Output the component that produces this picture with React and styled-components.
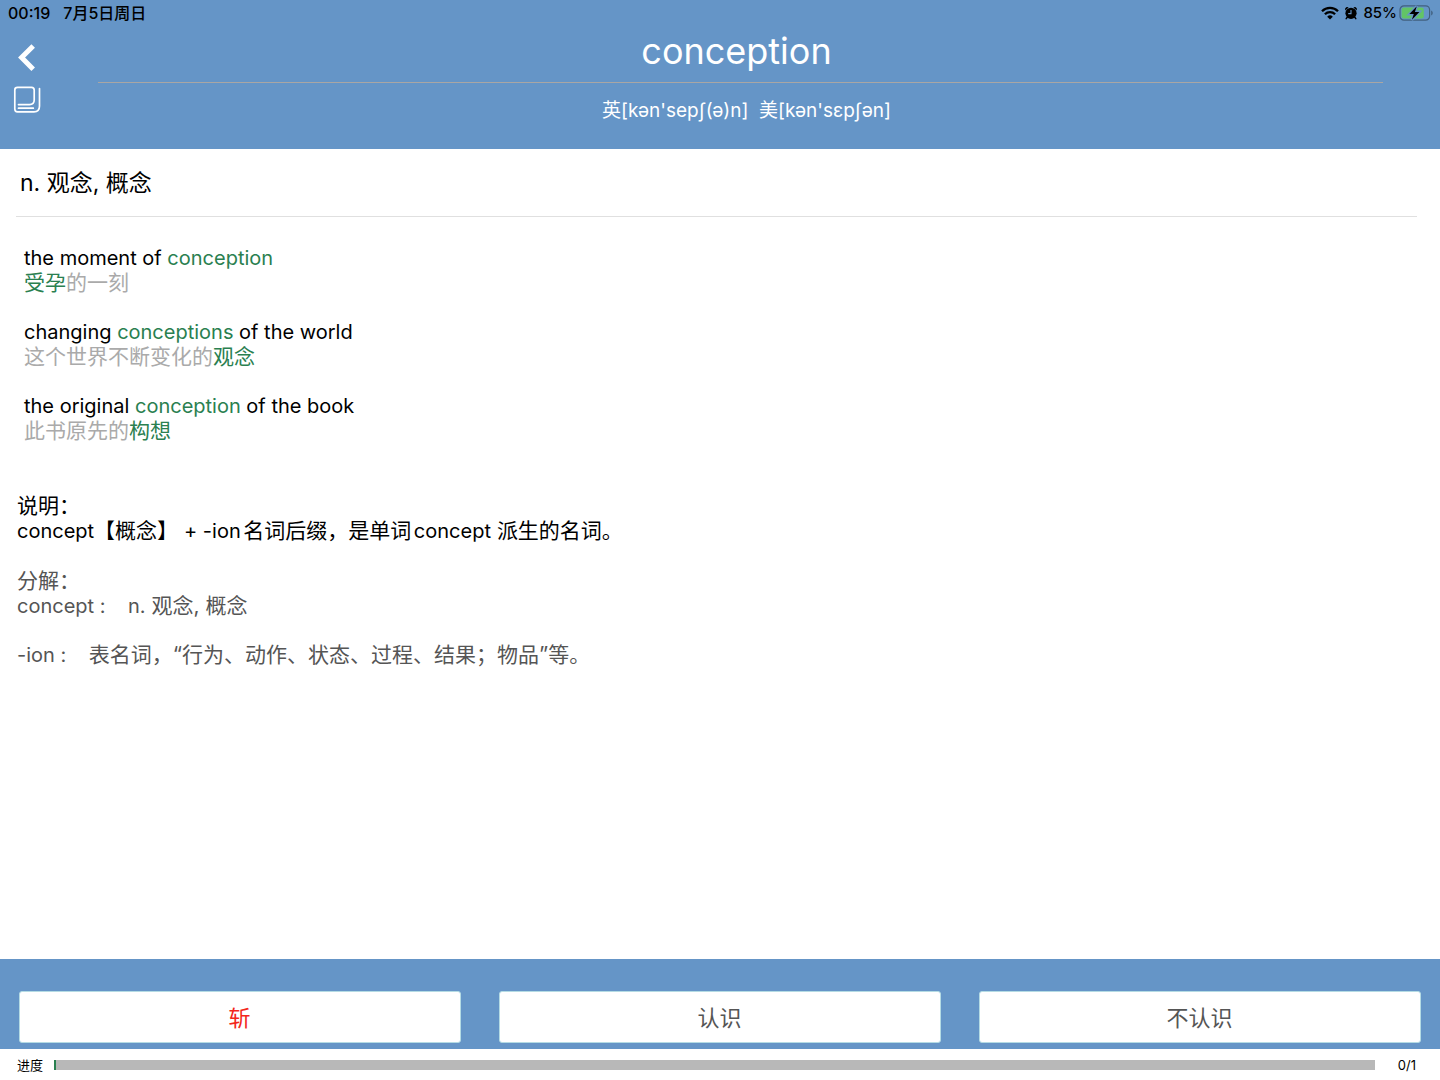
import React, { Component } from 'react'
import styled, { createGlobalStyle } from 'styled-components'

const GlobalStyle = createGlobalStyle`
    body {
        margin: 0;
        background: #fff;
        color: #000;
        font-family: Inter, "Noto Sans CJK SC", sans-serif;
    }
    * {
        box-sizing: border-box;
    }
`
const Page = styled.div`
    display: flex;
    flex-direction: column;
    min-height: 100vh;
`
const Header = styled.header`
    background: #6595c7;
    padding-bottom: 25px;
`
const StatusBar = styled.div`
    display: flex;
    align-items: center;
    justify-content: space-between;
    height: 25px;
    padding: 0 6px 0 8px;
    font-size: 15px;
    font-weight: 500;
`
const StatusGroup = styled.div`
    display: flex;
    align-items: center;
    gap: ${props => props.$gap};
`
const Clock = styled(StatusGroup)`
    font-size: 16px;
    line-height: 20px;
`
const HeaderBody = styled.div`
    display: flex;
    padding: 0 57px 0 12px;
`
const SideTools = styled.nav`
    display: flex;
    flex-direction: column;
    align-items: flex-start;
    gap: 12px;
    flex: 0 0 86px;
    padding-top: 17px;
`
const IconButton = styled.button`
    display: block;
    width: 30px;
    height: 30px;
    padding: 0;
    border: 0;
    background: none;
    color: #fff;
    svg {
        display: block;
    }
`
const WordPanel = styled.div`
    flex: 1;
    text-align: center;
    color: #fff;
`
const Word = styled.h1`
    margin: 0;
    padding: 2px 8px 7px 0;
    border-bottom: 1px solid #a9a6a4;
    font-size: 36px;
    line-height: 48px;
    font-weight: 400;
`
const Phonetics = styled.p`
    margin: 0;
    padding: 15px 0 0 12px;
    font-size: 19px;
    line-height: 26px;
    white-space: pre-wrap;
`
const Content = styled.main`
    flex: 1;
    padding: 0 23px 0 16px;
`
const Definition = styled.h2`
    margin: 0;
    padding: 17px 4px 15px;
    border-bottom: 1px solid #e0e0e0;
    font-size: 23px;
    line-height: 35px;
    font-weight: 400;
`
const Examples = styled.ul`
    list-style: none;
    display: flex;
    flex-direction: column;
    gap: 25px;
    margin: 0;
    padding: 29px 8px 0;
`
const Line = styled.p`
    margin: 0;
    font-size: ${props => props.$latin ? '20px' : '21px'};
    line-height: ${props => props.$latin ? '24px' : '25px'};
    color: ${props => props.$muted ? '#aaa' : 'inherit'};
    white-space: pre-wrap;
    text-autospace: normal;
`
const Mark = styled.em`
    font-style: normal;
    color: #2a8050;
`
const Notes = styled.section`
    padding: ${props => props.$first ? '50px' : '25px'} 1px 0;
    color: ${props => props.$soft ? '#555' : '#000'};
`
const Latin = styled.span`
    font-size: 20px;
    line-height: 1;
`
const Part = styled.div`
    & + & {
        padding-top: 24px;
    }
`
const Actions = styled.div`
    display: grid;
    grid-template-columns: repeat(3, 1fr);
    gap: 38px;
    padding: 32px 19px 6px;
    background: #6595c7;
`
const ActionButton = styled.button`
    height: 52px;
    padding: 0 1px 3px 0;
    border: 1px solid #b4dbe4;
    border-radius: 3px;
    background: #fff;
    color: ${props => props.$danger ? '#f3261b' : '#555'};
    font-family: inherit;
    font-size: 22px;
`
const ProgressRow = styled.footer`
    display: flex;
    align-items: center;
    height: 31px;
    padding: 0 24px 0 17px;
    font-size: 13px;
    label {
        flex: 0 0 37px;
    }
`
const ProgressBar = styled.progress`
    appearance: none;
    flex: 1;
    height: 10px;
    border: 0;
    border-left: 2px solid #2a8050;
    background: #b8b8b8;
    &::-webkit-progress-bar {
        background: #b8b8b8;
    }
    &::-webkit-progress-value {
        background: #2a8050;
    }
`
const Count = styled.span`
    flex: 0 0 41px;
    text-align: right;
`

const WifiIcon = () => (
    <svg width="18" height="14" viewBox="0 0 18 14" fill="none" stroke="#000" strokeWidth="2.3">
        <path d="M1 5.2A11.4 11.4 0 0 1 17 5.2" />
        <path d="M3.9 8.2A7.2 7.2 0 0 1 14.1 8.2" />
        <path d="M9 13.6L6.2 10.7A4 4 0 0 1 11.8 10.7Z" fill="#000" stroke="none" />
    </svg>
)

const AlarmIcon = () => (
    <svg width="14" height="14" viewBox="0 0 14 14">
        <circle cx="7" cy="7.3" r="5.6" />
        <path d="M1.2 4.4Q.6 2 2.2 1.3Q3.4 .7 4.6 1.4ZM12.8 4.4Q13.4 2 11.8 1.3Q10.6 .7 9.4 1.4Z" />
        <path d="M3.2 11.2L2.2 12.6M10.8 11.2L11.8 12.6" stroke="#000" strokeWidth="1.5" strokeLinecap="round" />
        <path d="M7 4V7.6H4.2" fill="none" stroke="#6595c7" strokeWidth="1.1" />
    </svg>
)

const BatteryIcon = () => (
    <svg width="35" height="16" viewBox="0 0 35 16">
        <rect x="1" y=".8" width="29.6" height="14.4" rx="4" fill="none" stroke="#41607f" strokeWidth="1.2" />
        <rect x="2.6" y="2.5" width="22.2" height="11" rx="2.2" fill="#62c466" />
        <path d="M32.2 5.5C34.2 6.3 34.2 9.7 32.2 10.5Z" fill="#41607f" />
        <path d="M17.8 1.2L10.4 9.1H14.8L12.9 14.8L20.4 6.9H15.9Z" fill="#000" stroke="#6595c7" strokeWidth="2.6" paintOrder="stroke" />
    </svg>
)

const BackIcon = () => (
    <svg width="30" height="30" viewBox="0 0 30 30" fill="none" stroke="#fff" strokeWidth="5">
        <path d="M21.2 4L9.6 15.6L21.2 27.2" />
    </svg>
)

const CardsIcon = () => (
    <svg width="30" height="30" viewBox="0 0 30 30" fill="none" stroke="#fff" strokeWidth="1.7" strokeLinecap="round">
        <path d="M6.5 20.6H17.5Q22.2 20.6 22.2 16V6Q22.2 3.3 19.5 3.3H5.5Q2.8 3.3 2.8 6V25Q2.8 27.8 5.5 27.8H22Q27.5 27.8 27.5 22V4.5" />
        <path d="M6.5 24.2H21.3" />
    </svg>
)

const examples = [
    {
        en: ['the moment of ', 'conception', ''],
        zh: ['', '受孕', '的一刻'],
    },
    {
        en: ['changing ', 'conceptions', ' of the world'],
        zh: ['这个世界不断变化的', '观念', ''],
    },
    {
        en: ['the original ', 'conception', ' of the book'],
        zh: ['此书原先的', '构想', ''],
    },
]

const Marked = ({ parts }) => <>{parts[0]}<Mark>{parts[1]}</Mark>{parts[2]}</>

export default class App extends Component {
    constructor(props) {
        super(props);
        this.state = { done: 0, total: 1 }
        this._next = this._next.bind(this)
    }
    _next() {
        const { done, total } = this.state;
        this.setState({ done: Math.min(done + 1, total) })
    }

    render() {
        const { done, total } = this.state;

        return <Page>
            <GlobalStyle />
            <Header>
                <StatusBar>
                    <Clock $gap="13px">
                        <span>00:19</span>
                        <span>7月5日周日</span>
                    </Clock>
                    <StatusGroup $gap="5px">
                        <WifiIcon />
                        <AlarmIcon />
                        <StatusGroup $gap="2px">
                            <span>85%</span>
                            <BatteryIcon />
                        </StatusGroup>
                    </StatusGroup>
                </StatusBar>
                <HeaderBody>
                    <SideTools>
                        <IconButton aria-label="返回"><BackIcon /></IconButton>
                        <IconButton aria-label="卡片"><CardsIcon /></IconButton>
                    </SideTools>
                    <WordPanel>
                        <Word>conception</Word>
                        <Phonetics>英[kən'sepʃ(ə)n]  美[kən'sɛpʃən]</Phonetics>
                    </WordPanel>
                </HeaderBody>
            </Header>
            <Content>
                <Definition>n. 观念, 概念</Definition>
                <Examples>
                    {examples.map(item => (
                        <li key={item.en.join('')}>
                            <Line $latin><Marked parts={item.en} /></Line>
                            <Line $muted><Marked parts={item.zh} /></Line>
                        </li>
                    ))}
                </Examples>
                <Notes $first>
                    <Line>说明：</Line>
                    <Line><Latin>concept</Latin>【概念】 <Latin>+ -ion</Latin>名词后缀，是单词<Latin>concept</Latin> 派生的名词。</Line>
                </Notes>
                <Notes $soft>
                    <Line>分解：</Line>
                    <Part>
                        <Line><Latin>concept :    n.</Latin> 观念, 概念</Line>
                    </Part>
                    <Part>
                        <Line><Latin>-ion :    </Latin>表名词，“行为、动作、状态、过程、结果；物品”等。</Line>
                    </Part>
                </Notes>
            </Content>
            <Actions>
                <ActionButton $danger onClick={this._next}>斩</ActionButton>
                <ActionButton onClick={this._next}>认识</ActionButton>
                <ActionButton onClick={this._next}>不认识</ActionButton>
            </Actions>
            <ProgressRow>
                <label htmlFor="study-progress">进度</label>
                <ProgressBar id="study-progress" value={done} max={total} />
                <Count>{done}/{total}</Count>
            </ProgressRow>
        </Page>
    }
}
